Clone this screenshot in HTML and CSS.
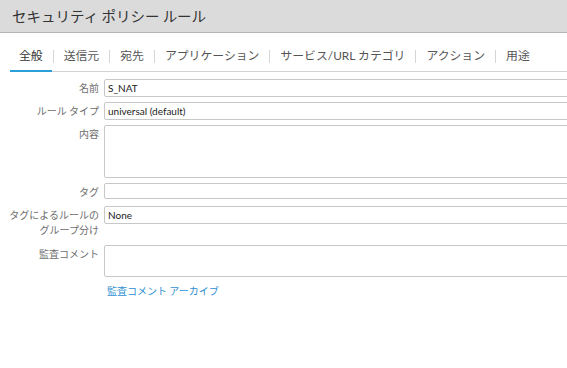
FILE: index.html
```html
<!DOCTYPE html>
<html>
	<head>
		<meta charset="utf-8">
		<link rel="stylesheet" href="styles.css">
	</head>

	<body>
		<div class="dialog">
			<div class="title">セキュリティ ポリシー ルール</div>

			<div class="tabs">
				<span class="tab active">全般</span><span class="sep"></span>
				<span class="tab">送信元</span><span class="sep"></span>
				<span class="tab">宛先</span><span class="sep"></span>
				<span class="tab">アプリケーション</span><span class="sep"></span>
				<span class="tab">サービス/URL カテゴリ</span><span class="sep"></span>
				<span class="tab">アクション</span><span class="sep"></span>
				<span class="tab">用途</span>
			</div>

			<form class="form">
				<div class="row">
					<label class="label">名前</label>
					<input class="field f-name" type="text" value="S_NAT">
				</div>
				<div class="row">
					<label class="label">ルール タイプ</label>
					<input class="field f-type" type="text" value="universal (default)">
				</div>
				<div class="row">
					<label class="label">内容</label>
					<textarea class="field f-desc"></textarea>
				</div>
				<div class="row row-tag">
					<label class="label">タグ</label>
					<input class="field f-tag" type="text" value="">
				</div>
				<div class="row row-group">
					<label class="label">タグによるルールの<br>グループ分け</label>
					<input class="field f-group" type="text" value="None">
				</div>
				<div class="row">
					<label class="label">監査コメント</label>
					<textarea class="field f-comment"></textarea>
				</div>
				<a class="archive" href="#">監査コメント アーカイブ</a>
			</form>
		</div>
	</body>
</html>
```

FILE: styles.css
```css
html, body {
	margin: 0;
	padding: 0;
	background-color: #FFF;
	overflow: hidden;
}

body {
	width: 567px;
	height: 368px;
	font-family: Lato, "Noto Sans CJK JP", sans-serif;
	color: #333;
}

.title {
	height: 32px;
	line-height: 32px;
	padding-left: 12px;
	background-color: #DBDBDB;
	border-bottom: 1px solid #B4B4B4;
	font-family: "Noto Sans CJK JP", sans-serif;
	font-size: 14.5px;
	color: #333;
}

.tabs {
	display: flex;
	align-items: flex-start;
	margin: 12px 0 0 10px;
	width: 700px;
	border-bottom: 1px solid #D2D2D2;
}

.tab {
	padding: 0 9px 3px 9px;
	line-height: 22px;
	font-family: Lato, "Noto Sans CJK JP", sans-serif;
	font-size: 11.85px;
	color: #555;
	white-space: nowrap;
	border-bottom: 2px solid transparent;
	margin-bottom: -1px;
}

.tab.active {
	color: #333;
	border-bottom-color: #2A9FD8;
}

.sep {
	width: 1px;
	height: 13px;
	margin: 5px 1px 0 1px;
	background-color: #D4D4D4;
}

.form {
	display: flex;
	flex-direction: column;
	width: 700px;
	margin-top: 7px;
}

.row {
	display: flex;
	align-items: flex-start;
	margin-bottom: 5px;
}

.row-tag {
	margin-bottom: 7px;
}

.row-group {
	margin-bottom: 8px;
}

.label {
	width: 100px;
	flex-shrink: 0;
	padding: 1px 1px 0 0;
	box-sizing: border-box;
	margin-right: 4px;
	text-align: right;
	font-family: "Noto Sans CJK JP", sans-serif;
	font-size: 10px;
	line-height: 15px;
	color: #6E6E6E;
	white-space: nowrap;
}

.field {
	flex: 1;
	box-sizing: border-box;
	margin: 0;
	padding: 0 3px;
	border: 1px solid #C8C8C8;
	border-radius: 2px;
	background-color: #FFF;
	font-family: Lato, "Noto Sans CJK JP", sans-serif;
	font-size: 10px;
	color: #222;
	outline: none;
	resize: none;
}

.f-name,
.f-type,
.f-group {
	height: 18px;
}

.f-desc {
	height: 53px;
}

.f-tag {
	height: 16px;
}

.f-comment {
	height: 32px;
}

.archive {
	margin: 1px 0 0 107px;
	font-family: "Noto Sans CJK JP", sans-serif;
	font-size: 10px;
	line-height: 15px;
	color: #2F8FD2;
	text-decoration: none;
}
```
